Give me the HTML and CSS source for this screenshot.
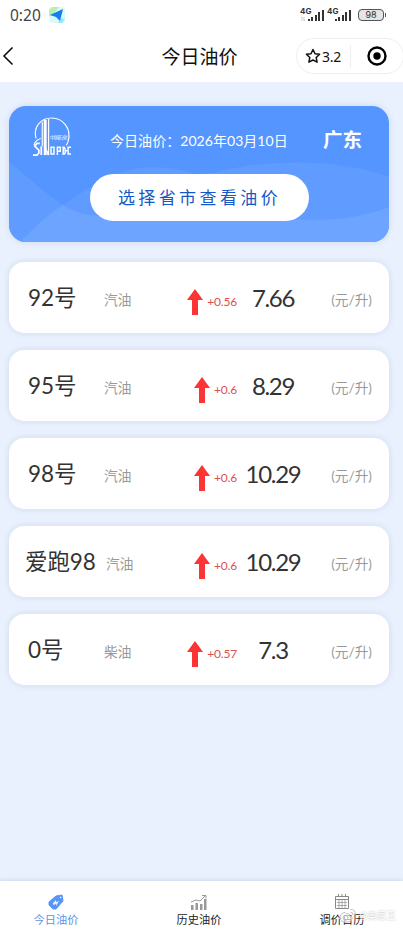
FILE: index.html
```html
<!DOCTYPE html>
<html lang="zh-CN">
<head>
  <meta charset="UTF-8">
  <meta name="viewport" content="width=device-width, initial-scale=1">
  <title>今日油价</title>
  <link rel="stylesheet" href="styles.css">
</head>
<body>
  <header class="top">
    <div class="status-bar">
      <span class="clock">0:20</span>
      <svg class="nav-app" viewBox="0 0 16 16">
        <rect width="16" height="16" rx="4" fill="#dcf8fa"/>
        <path d="M3 0h7L3 9H0V3z" fill="#b9efad"/>
        <path d="M9 16h4l3-4-4-1z" fill="#8eeaff"/>
        <path d="M1 8L14 2l-3 12-4-4z" fill="#157eee"/>
      </svg>
      <div class="status-right">
        <svg class="signals" viewBox="0 0 53 16">
          <g fill="#333">
            <path d="M8 12h2v2H8zM11 10h2v4h-2zM15 8h2v6h-2zM18 5h2v9h-2zM22 3h2v11h-2z"/>
            <path d="M35 12h2v2h-2zM38 10h2v4h-2zM42 8h2v6h-2zM45 5h2v9h-2zM49 3h2v11h-2z"/>
          </g>
          <path d="M2 10v4M1 11l1-1M4 10v4l1-1" fill="none" stroke="#bbb" stroke-width=".7"/>
          <text x="0" y="7">4G</text>
          <text x="27" y="7">4G</text>
        </svg>
        <span class="battery">98</span>
      </div>
    </div>
    <div class="nav-bar">
      <svg class="back" viewBox="0 0 12 20"><path d="M10.5 1.500L2 10l8.500 8.500" fill="none" stroke="#111" stroke-width="1.600"/></svg>
      <h1>今日油价</h1>
      <div class="capsule">
        <svg class="star" viewBox="0 0 16 16"><path d="M8 1.500l2 4.200 4.600.6-3.400 3.200.9 4.700L8 12l-4.100 2.200.9-4.700L1.400 6.300 6 5.700z" fill="none" stroke="#111" stroke-width="1.500" stroke-linejoin="round"/></svg>
        <span class="score">3.2</span>
        <span class="divider"></span>
        <svg class="target" viewBox="0 0 20 20"><circle cx="10" cy="10" r="8.500" fill="none" stroke="#000" stroke-width="2.400"/><circle cx="10" cy="10" r="3.700"/></svg>
      </div>
    </div>
  </header>

  <main>
    <section class="banner">
      <svg class="waves" viewBox="0 0 380 136" preserveAspectRatio="none">
        <path d="M0 56C18 70 35 87 54 99C92 73 116 61 144 61Q165 61 184 68L204 67C250 54 325 51 380 71V136H0z" fill="#609cff"/>
        <path d="M11 136C25 122 38 109 54 99C65 106 75 109 90 110L287 113C320 116 356 111 380 101V136z" fill="#6da4ff"/>
      </svg>
      <div class="banner-row">
        <svg class="logo" viewBox="0 0 40 42">
          <g fill="none" stroke="#fff">
            <path d="M3 22C0 10 8 1 19 1s21 10 17 24q-1 3-2 4M8 22q-6 2-7 7" stroke-width="1.200"/>
            <path d="M12.500 3v36" stroke-width="3"/>
            <path d="M9.500 5v25M16 2v37" stroke-width="1.200"/>
            <path d="M7 27H4l-2 3 4 4v3l-2 2H0M8.500 30v9M12 31l4 8" stroke-width="1.800"/>
            <path d="M18.500 31h3v7h-3zM25 39v-8h3v4h-3M31 31v7M30 31h2l1 2v4l-1 1h-2" stroke-width="1.500"/>
            <path d="M39 31h-3v7h3M33 34.500h2" stroke-width="1.500"/>
          </g>
          <text x="17.500" y="23" class="logo-cn" textLength="18">中国石化</text>
        </svg>
        <span class="date">今日油价：2026年03月10日</span>
        <span class="province">广东</span>
      </div>
      <button class="choose">选择省市查看油价</button>
    </section>

    <ul class="prices">
      <li>
        <span class="grade">92号</span><span class="kind">汽油</span>
        <span class="change"><svg viewBox="0 0 16 26"><path d="M8 0l8 11h-5v15H5V11H0z"/></svg>+0.56</span>
        <span class="price">7.66</span><span class="unit">(元/升)</span>
      </li>
      <li>
        <span class="grade">95号</span><span class="kind">汽油</span>
        <span class="change"><svg viewBox="0 0 16 26"><path d="M8 0l8 11h-5v15H5V11H0z"/></svg>+0.6</span>
        <span class="price">8.29</span><span class="unit">(元/升)</span>
      </li>
      <li>
        <span class="grade">98号</span><span class="kind">汽油</span>
        <span class="change"><svg viewBox="0 0 16 26"><path d="M8 0l8 11h-5v15H5V11H0z"/></svg>+0.6</span>
        <span class="price">10.29</span><span class="unit">(元/升)</span>
      </li>
      <li class="long-name">
        <span class="grade">爱跑98</span><span class="kind">汽油</span>
        <span class="change"><svg viewBox="0 0 16 26"><path d="M8 0l8 11h-5v15H5V11H0z"/></svg>+0.6</span>
        <span class="price">10.29</span><span class="unit">(元/升)</span>
      </li>
      <li>
        <span class="grade">0号</span><span class="kind">柴油</span>
        <span class="change"><svg viewBox="0 0 16 26"><path d="M8 0l8 11h-5v15H5V11H0z"/></svg>+0.57</span>
        <span class="price">7.3</span><span class="unit">(元/升)</span>
      </li>
    </ul>
  </main>

  <nav class="tabs">
    <a class="tab active">
      <svg viewBox="0 0 16 16"><path d="M8 2l6-1 1 6-7 8H5l-4-4V8z" fill="#5796f4" stroke="#5796f4" stroke-linejoin="round"/><circle cx="12.500" cy="3.500" r=".8" fill="#fff"/><path d="M5 9l3-3v2l3-1-3 5v-2l-3 1z" fill="#e5efff"/></svg>
      <span>今日油价</span>
    </a>
    <a class="tab">
      <svg viewBox="0 0 16 16"><path d="M0 11h2.500v5H0zM4.500 9H7v7H4.500zM9 10h2.500v6H9zM13 5h2.500v11H13z" fill="#999"/><path d="M0 8l5-2 4 1 5-5M11 1.500h4v3" fill="none" stroke="#999"/></svg>
      <span>历史油价</span>
    </a>
    <a class="tab">
      <svg viewBox="0 0 16 16"><path d="M1.500 2.500h13v12h-13zM1 5.500h14M4.500 0v3M8 0v3M11.500 0v3" fill="none" stroke="#888"/><path d="M3 8.500h10M3 11.500h10M5 6v8M8 6v8M11 6v8" stroke="#999" stroke-width=".8"/></svg>
      <span>调价日历</span>
    </a>
    <div class="watermark">
      <svg viewBox="0 0 18 16"><path d="M7 4C3 4 1 8 1 10c0 6 13 6 13 0 0-2-3-2-3-2 1-3-2-3-4-2" fill="#fff" fill-opacity=".6" stroke="#bbb"/><circle cx="7" cy="10" r="2.500" fill="none" stroke="#bbb"/><path d="M12 4q3 0 3 3M12 1q6 0 5 6" fill="none" stroke="#bbb"/></svg>
      <span>@奥尼王</span>
    </div>
  </nav>
</body>
</html>
```
FILE: styles.css
```css
* {
  box-sizing: border-box;
}
body {
  margin: 0;
  height: 100vh;
  display: flex;
  flex-direction: column;
  overflow: hidden;
  background: #eaf1fe;
  color: #333;
  font-family: Lato, "Noto Sans CJK SC", sans-serif;
}
.top {
  height: 82px;
  background: #fff;
}
.status-bar {
  height: 30px;
  padding: 0 18px 0 10px;
  display: flex;
  align-items: center;
}
.clock {
  width: 32px;
  font: 15.5px "Noto Sans", sans-serif;
  color: #444;
}
.nav-app {
  width: 16px;
  height: 16px;
  margin-left: 7px;
}
.status-right {
  margin-left: auto;
  display: flex;
  align-items: center;
  gap: 5px;
}
.signals {
  width: 53px;
  height: 16px;
}
.signals text {
  font: bold 8px Inter, sans-serif;
  fill: #333;
}
.battery {
  position: relative;
  width: 26px;
  height: 12px;
  margin-right: 1px;
  border: 1.5px solid #555;
  border-radius: 4px;
  background: #e5e5e5;
  font: 9px/10px Inter, sans-serif;
  text-align: center;
}
.battery::after {
  content: "";
  position: absolute;
  right: -3px;
  top: 3px;
  width: 1px;
  height: 4px;
  background: #555;
}
.nav-bar {
  height: 52px;
  display: grid;
  grid-template-columns: 103px 1fr 107px;
  align-items: center;
}
.back {
  width: 12px;
  height: 20px;
  margin-left: 2px;
}
h1 {
  margin: 0;
  padding-top: 1px;
  font-size: 19px;
  font-weight: 400;
  line-height: 28px;
  text-align: center;
  color: #111;
}
.capsule {
  width: 108px;
  height: 36px;
  padding-left: 8px;
  border: 1px solid #eee;
  border-radius: 18px;
  display: flex;
  align-items: center;
}
.star {
  width: 16px;
  height: 16px;
}
.score {
  width: 20px;
  margin-left: 1px;
  font: 14px "Noto Sans", sans-serif;
  letter-spacing: -0.3px;
  color: #111;
}
.divider {
  width: 1px;
  height: 23px;
  margin-left: 8px;
  background: #eee;
}
.target {
  width: 20px;
  height: 20px;
  margin-left: 16px;
}
main {
  flex: 1;
  padding: 24px 14px 0 9px;
}
.banner {
  position: relative;
  height: 136px;
  border-radius: 17px;
  background: #5595ff;
  box-shadow: 0 0 7px rgba(70, 100, 150, 0.16);
  color: #fff;
}
.waves {
  position: absolute;
  inset: 0;
  width: 100%;
  height: 100%;
  border-radius: 17px;
}
.banner-row {
  position: relative;
  height: 68px;
  padding: 11px 27px 0 24px;
  display: flex;
}
.logo {
  width: 39px;
  height: 41px;
}
.logo-cn {
  font-size: 5px;
  fill: #fff;
}
.date {
  width: 190px;
  margin: 14px 0 0 38px;
  font-size: 14px;
  line-height: 19px;
  letter-spacing: 0.05px;
  white-space: nowrap;
}
.province {
  margin: 9px 0 0 auto;
  font-size: 19.5px;
  font-weight: 700;
  line-height: 28px;
}
.choose {
  position: relative;
  display: block;
  width: 219px;
  height: 47px;
  margin-left: 81px;
  padding: 0 0 3px;
  border: 0;
  border-radius: 24px;
  background: #fff;
  color: #1759c4;
  font: 17px "Noto Sans CJK SC", sans-serif;
  letter-spacing: 3.4px;
}
.prices {
  margin: 20px 0 0;
  padding: 0;
  list-style: none;
}
.prices li {
  height: 71px;
  margin-bottom: 17px;
  padding: 0 17px 0 19px;
  border-radius: 15px;
  background: #fff;
  box-shadow: 0 0 7px rgba(70, 100, 150, 0.16);
  display: grid;
  grid-template-columns: 76px 57px 76px 72px 1fr;
  align-items: center;
}
.prices .long-name {
  padding-left: 16px;
  grid-template-columns: 81px 55px 76px 72px 1fr;
}
.grade {
  font-size: 22.5px;
  line-height: 32px;
  letter-spacing: -0.1px;
  white-space: nowrap;
}
.kind,
.unit {
  padding-top: 5px;
  font-size: 13.7px;
  line-height: 20px;
  color: #999;
}
.unit {
  text-align: right;
}
.change {
  padding-top: 8px;
  display: flex;
  align-items: center;
  justify-content: flex-end;
  font-size: 12px;
  line-height: 26px;
  letter-spacing: -0.2px;
  color: #de5050;
}
.change svg {
  width: 16px;
  height: 26px;
  margin-right: 4px;
  fill: #fb3535;
}
.price {
  font-size: 24px;
  line-height: 32px;
  letter-spacing: -1.3px;
  text-align: center;
}
.tabs {
  position: relative;
  height: 48px;
  padding: 0 5px 0 0;
  background: #fff;
  box-shadow: 0 -1px 4px rgba(70, 100, 150, 0.18);
  display: flex;
  justify-content: space-between;
}
.tab {
  width: 112px;
  padding-top: 13px;
  display: flex;
  flex-direction: column;
  align-items: center;
  font-size: 11.2px;
  line-height: 16px;
  color: #222;
}
.tab svg {
  width: 16px;
  height: 16px;
  margin-bottom: 2px;
}
.tab.active {
  color: #5796e8;
}
/* sits over the last tab label */
.watermark {
  position: absolute;
  right: 7px;
  bottom: 5px;
  display: flex;
  align-items: center;
  gap: 4px;
  font-size: 9.5px;
  line-height: 14px;
  color: #fff;
  text-shadow: 0 0 2px #aaa;
}
.watermark svg {
  width: 17px;
  height: 16px;
}
```
